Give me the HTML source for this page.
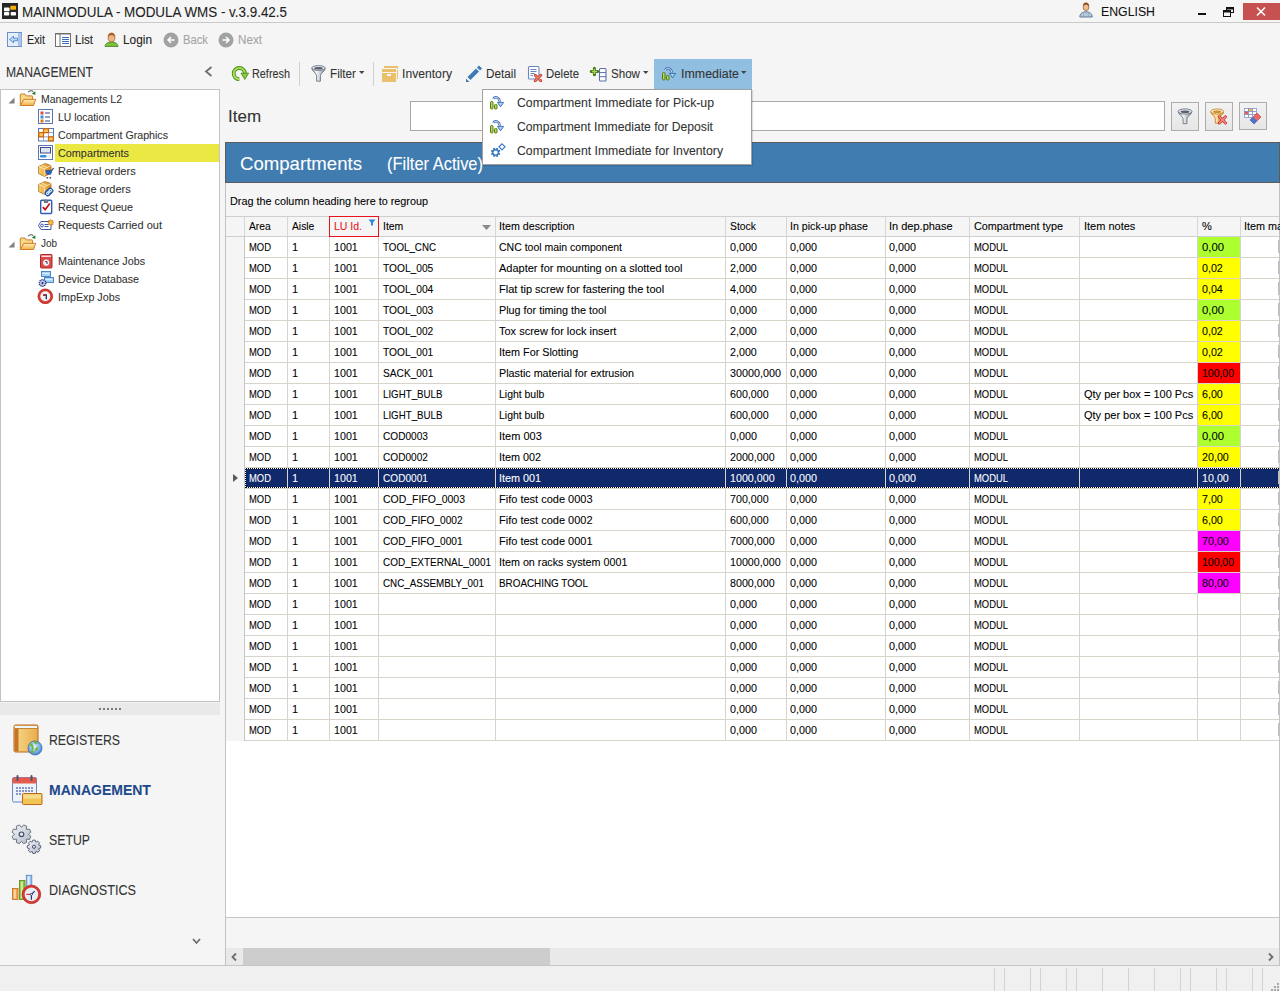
<!DOCTYPE html><html><head><meta charset="utf-8"><style>
html,body{margin:0;padding:0;width:1280px;height:991px;overflow:hidden;background:#f5f5f5;}
body{position:relative;font-family:"Liberation Sans",sans-serif;}
.t{position:absolute;white-space:nowrap;-webkit-text-stroke:0.08px currentColor;}
svg{overflow:visible}
</style></head><body>
<div style="position:absolute;left:0px;top:22px;width:1280px;height:1px;background:#c9c9c9;"></div>
<svg style="position:absolute;left:2px;top:3px;" width="16" height="16" viewBox="0 0 16 16"><rect x="0" y="0" width="16" height="16" fill="#262626"/><rect x="2" y="4.6" width="5.6" height="3.6" rx="0.8" fill="#fff"/><rect x="8.3" y="2.7" width="5.8" height="4" rx="0.8" fill="#f9b000"/><rect x="2" y="9" width="5.2" height="3.6" rx="0.8" fill="#fff"/><rect x="8.7" y="9" width="5.3" height="3.6" rx="0.8" fill="#fff"/></svg>
<div class="t" style="left:22px;top:5px;font-size:14px;line-height:14px;color:#222;font-weight:normal;transform:scaleX(0.9578);transform-origin:0 0;">MAINMODULA - MODULA WMS - v.3.9.42.5</div>
<svg style="position:absolute;left:1079px;top:2px;" width="14" height="16" viewBox="0 0 14 16"><path d="M0.8 15c0-3.2 2.3-5.2 6.2-5.2s6.2 2 6.2 5.2z" fill="#b4c8dc" stroke="#5a6f88" stroke-width="0.9"/><path d="M4.5 10.5v4.5M9.5 10.5v4.5" stroke="#8aa2bc" stroke-width="0.6"/><ellipse cx="7" cy="5" rx="2.9" ry="3.6" fill="#f0c08e" stroke="#8a5a2b" stroke-width="0.7"/><path d="M4 4.8C3.8 2 5.2.6 7 .6s3.2 1.4 3 4.2C9.5 3.2 8.3 2.7 7 2.7S4.5 3.2 4 4.8z" fill="#8e4f22"/></svg>
<div class="t" style="left:1101px;top:5px;font-size:13px;line-height:13px;color:#111;font-weight:normal;transform:scaleX(0.9461);transform-origin:0 0;">ENGLISH</div>
<div style="position:absolute;left:1198px;top:13px;width:8px;height:2px;background:#111;"></div>
<svg style="position:absolute;left:1223px;top:7px;" width="11" height="10" viewBox="0 0 11 10"><rect x="3.5" y="0.5" width="7" height="5" fill="none" stroke="#111" stroke-width="1"/><rect x="0.5" y="3.5" width="7" height="6" fill="#f5f5f5" stroke="#111" stroke-width="1"/><rect x="0.5" y="3.5" width="7" height="2" fill="#111"/><rect x="3.5" y="0.5" width="7" height="2" fill="#111"/></svg>
<div style="position:absolute;left:1243px;top:3px;width:37px;height:17px;background:#c75050;"></div>
<svg style="position:absolute;left:1255px;top:6px;" width="12" height="11" viewBox="0 0 12 11"><path d="M2 1.5L10 9.5M10 1.5L2 9.5" stroke="#fff" stroke-width="1.6"/></svg>
<svg style="position:absolute;left:7px;top:32px;" width="15" height="15" viewBox="0 0 15 15"><rect x="0.5" y="0.5" width="14" height="14" fill="#e6eef9" stroke="#6c8ecb"/><rect x="11" y="1" width="3.5" height="13" fill="#a9c4e8"/><path d="M2.5 7.5l4-3.3v2h4v2.6h-4v2z" fill="#b9dcf6" stroke="#3f79c8" stroke-width="0.8"/></svg>
<div class="t" style="left:27px;top:34px;font-size:12px;line-height:12px;color:#222;font-weight:normal;transform:scaleX(0.8993);transform-origin:0 0;">Exit</div>
<svg style="position:absolute;left:55px;top:33px;" width="16" height="14" viewBox="0 0 16 14"><rect x="0.5" y="0.5" width="15" height="13" fill="#fff" stroke="#707070"/><rect x="0" y="0" width="16" height="1.5" fill="#707070"/><path d="M5 1v13" stroke="#707070"/><path d="M7 4.5h7M7 6.5h7M7 8.5h7M7 10.5h7" stroke="#3a70c0" stroke-width="1"/></svg>
<div class="t" style="left:75px;top:34px;font-size:12px;line-height:12px;color:#222;font-weight:normal;transform:scaleX(0.9632);transform-origin:0 0;">List</div>
<svg style="position:absolute;left:104px;top:32px;" width="15" height="15" viewBox="0 0 15 15"><path d="M1 14.5c0-2.6 2.7-4.6 6.5-4.6s6.5 2 6.5 4.6z" fill="#7cbf3c" stroke="#3f7f1b" stroke-width="0.8"/><ellipse cx="7.5" cy="5.5" rx="3.4" ry="4.3" fill="#f0b483" stroke="#9a5b2b" stroke-width="0.7"/><path d="M4 5.5C3.8 2.3 5.5 0.8 7.5 0.8s3.7 1.5 3.5 4.7C10.3 3.8 9 3.2 7.5 3.2S4.7 3.8 4 5.5z" fill="#a8602c"/></svg>
<div class="t" style="left:123px;top:34px;font-size:12px;line-height:12px;color:#222;font-weight:normal;transform:scaleX(0.9872);transform-origin:0 0;">Login</div>
<svg style="position:absolute;left:163px;top:32px;" width="16" height="16" viewBox="0 0 16 16"><circle cx="8" cy="8" r="7.5" fill="#a2a2a2"/><path d="M11.5 8H5M8 5L5 8l3 3" stroke="#fff" stroke-width="1.5" fill="none"/></svg>
<div class="t" style="left:183px;top:34px;font-size:12px;line-height:12px;color:#a4a4a4;font-weight:normal;transform:scaleX(0.9368);transform-origin:0 0;">Back</div>
<svg style="position:absolute;left:218px;top:32px;" width="16" height="16" viewBox="0 0 16 16"><circle cx="8" cy="8" r="7.5" fill="#a2a2a2"/><path d="M4.5 8H11M8 5l3 3-3 3" stroke="#fff" stroke-width="1.5" fill="none"/></svg>
<div class="t" style="left:238px;top:34px;font-size:12px;line-height:12px;color:#a4a4a4;font-weight:normal;transform:scaleX(0.9722);transform-origin:0 0;">Next</div>
<div class="t" style="left:6px;top:65px;font-size:14px;line-height:14px;color:#333;font-weight:normal;transform:scaleX(0.8670);transform-origin:0 0;">MANAGEMENT</div>
<svg style="position:absolute;left:204px;top:66px;" width="9" height="11" viewBox="0 0 9 11"><path d="M7.5 1L2 5.5 7.5 10" stroke="#6d6d6d" stroke-width="1.8" fill="none"/></svg>
<div style="position:absolute;left:0px;top:89px;width:220px;height:613px;background:#fff;box-sizing:border-box;border:1px solid #c3c3c3;"></div>
<div style="position:absolute;left:0px;top:702px;width:220px;height:13px;background:#e9e9e9;"></div>
<div style="position:absolute;left:0px;top:702px;width:220px;height:1px;background:#f2f2f2;"></div>
<div style="position:absolute;left:99px;top:708px;width:2px;height:2px;background:#7a7a7a;"></div>
<div style="position:absolute;left:103px;top:708px;width:2px;height:2px;background:#7a7a7a;"></div>
<div style="position:absolute;left:107px;top:708px;width:2px;height:2px;background:#7a7a7a;"></div>
<div style="position:absolute;left:111px;top:708px;width:2px;height:2px;background:#7a7a7a;"></div>
<div style="position:absolute;left:115px;top:708px;width:2px;height:2px;background:#7a7a7a;"></div>
<div style="position:absolute;left:119px;top:708px;width:2px;height:2px;background:#7a7a7a;"></div>
<svg style="position:absolute;left:8px;top:97px;" width="7" height="7" viewBox="0 0 7 7"><path d="M6.5 0.5V6.5H0.5z" fill="#808080"/></svg>
<svg style="position:absolute;left:18px;top:88px;" width="20" height="20" viewBox="0 0 20 20"><defs><linearGradient id="fd" x1="0" y1="0" x2="0" y2="1"><stop offset="0" stop-color="#fff0c0"/><stop offset="1" stop-color="#f0b045"/></linearGradient></defs><path d="M2.3 17.3V6.6Q2.3 6 2.9 6H7L8 7.9h6q.6 0 .6.6v3" fill="#f8d98e" stroke="#cf7d22" stroke-width="1"/><path d="M5.8 11.3H17.7L15.5 17.5H2.3z" fill="url(#fd)" stroke="#cf7d22" stroke-width="1"/><path d="M10.2 4.2C11.3 2.4 14 2.2 15.2 3.6" stroke="#666" stroke-width="1.1" fill="none"/><path d="M13.8 5.8L17.3 3.2V7z" fill="#1f7d1f"/></svg>
<div class="t" style="left:41px;top:94px;font-size:11px;line-height:11px;color:#333;font-weight:normal;transform:scaleX(0.9529);transform-origin:0 0;">Managements L2</div>
<div style="position:absolute;left:55px;top:144px;width:164px;height:18px;background:#ece843;"></div>
<svg style="position:absolute;left:38px;top:109px;" width="17" height="17" viewBox="0 0 17 17"><rect x="0.5" y="0.5" width="14" height="14" fill="#fff" stroke="#5a74b4"/><rect x="2.5" y="2.5" width="3" height="3" fill="#dd4a3e"/><rect x="2.5" y="6.5" width="3" height="3" fill="#3a90e0"/><rect x="2.5" y="10.5" width="3" height="3" fill="#e07a12"/><path d="M7 4h5M7 8h5M7 12h5" stroke="#2c3f88" stroke-width="1"/></svg>
<div class="t" style="left:58px;top:112px;font-size:11px;line-height:11px;color:#333;font-weight:normal;transform:scaleX(0.9446);transform-origin:0 0;">LU location</div>
<svg style="position:absolute;left:38px;top:128px;" width="17" height="17" viewBox="0 0 17 17"><rect x="0.5" y="0.5" width="15" height="12.5" fill="#fff" stroke="#5a74b4"/><path d="M0.5 4.6h15M0.5 8.8h15M5.5 0.5v12.5M10.5 0.5v12.5" stroke="#7a90c8" stroke-width="0.8"/><rect x="5.5" y="0.8" width="5" height="3.8" fill="#f6c85a" stroke="#d2650a" stroke-width="1.2"/><rect x="0.8" y="4.6" width="4.7" height="4.2" fill="#f6c85a" stroke="#d2650a" stroke-width="1.2"/><rect x="10.5" y="8.8" width="4.8" height="4" fill="#f6c85a" stroke="#d2650a" stroke-width="1.2"/></svg>
<div class="t" style="left:58px;top:130px;font-size:11px;line-height:11px;color:#333;font-weight:normal;transform:scaleX(0.9673);transform-origin:0 0;">Compartment Graphics</div>
<svg style="position:absolute;left:38px;top:145px;" width="17" height="17" viewBox="0 0 17 17"><rect x="0.5" y="0.5" width="14" height="14" fill="#fff" stroke="#5a74b4"/><rect x="2.5" y="2.5" width="10" height="5.5" fill="#dfe4f0" stroke="#3a4f8a" stroke-width="1"/><rect x="2" y="10" width="6.5" height="2.5" rx="0.8" fill="#3a8ee0"/><rect x="9.5" y="10" width="3" height="2.5" fill="#e8eef8"/></svg>
<div class="t" style="left:58px;top:148px;font-size:11px;line-height:11px;color:#333;font-weight:normal;transform:scaleX(0.9842);transform-origin:0 0;">Compartments</div>
<svg style="position:absolute;left:38px;top:163px;" width="17" height="17" viewBox="0 0 17 17"><defs><linearGradient id="bx" x1="0" x2="1"><stop offset="0" stop-color="#f7cf6a"/><stop offset="1" stop-color="#d98a1e"/></linearGradient></defs><path d="M0.5 3.5L7 0.5 13 2.5V10L6.5 13.5 0.5 10.5z" fill="url(#bx)" stroke="#a8681a" stroke-width="0.7"/><path d="M0.8 3.6L6.3 5.8 12.8 2.6M6.3 5.8V13.2" stroke="#fff3d0" stroke-width="0.8" fill="none"/><path d="M3.5 2.2l6 2.4" stroke="#fde7a8" stroke-width="1"/><path d="M7.5 7.5h6.5l-1.3 3.8H9z" fill="#2a62cc" stroke="#163e90" stroke-width="0.6"/><path d="M13.8 7.5l1.7-2.5" stroke="#163e90" stroke-width="1.2"/><rect x="8.5" y="14" width="1.6" height="1.6" fill="#555"/><rect x="11.5" y="14" width="1.6" height="1.6" fill="#555"/></svg>
<div class="t" style="left:58px;top:166px;font-size:11px;line-height:11px;color:#333;font-weight:normal;">Retrieval orders</div>
<svg style="position:absolute;left:38px;top:181px;" width="17" height="17" viewBox="0 0 17 17"><defs><linearGradient id="bx" x1="0" x2="1"><stop offset="0" stop-color="#f7cf6a"/><stop offset="1" stop-color="#d98a1e"/></linearGradient></defs><path d="M0.5 3.5L7 0.5 13 2.5V10L6.5 13.5 0.5 10.5z" fill="url(#bx)" stroke="#a8681a" stroke-width="0.7"/><path d="M0.8 3.6L6.3 5.8 12.8 2.6M6.3 5.8V13.2" stroke="#fff3d0" stroke-width="0.8" fill="none"/><path d="M3.5 2.2l6 2.4" stroke="#fde7a8" stroke-width="1"/><rect x="6.5" y="8.2" width="9" height="5.6" rx="2.6" transform="rotate(-45 11 11)" fill="#2a66c8" stroke="#123c88" stroke-width="0.7"/><ellipse cx="9.8" cy="12.2" rx="1.5" ry="1" transform="rotate(-45 9.8 12.2)" fill="none" stroke="#fff" stroke-width="1"/><ellipse cx="12.2" cy="9.8" rx="1.5" ry="1" transform="rotate(-45 12.2 9.8)" fill="none" stroke="#fff" stroke-width="1"/></svg>
<div class="t" style="left:58px;top:184px;font-size:11px;line-height:11px;color:#333;font-weight:normal;">Storage orders</div>
<svg style="position:absolute;left:40px;top:199px;" width="17" height="17" viewBox="0 0 17 17"><rect x="0.7" y="1.2" width="11" height="13.3" rx="1" fill="#fff" stroke="#2f5fb5" stroke-width="1.4"/><path d="M3.5 1.5h5l-.6 2.5H4.1z" fill="#777"/><path d="M5 0.6h2v1.2H5z" fill="#888"/><path d="M2.8 8.2L5.2 10.6 9.8 4.6" stroke="#c8141e" stroke-width="1.7" fill="none"/></svg>
<div class="t" style="left:58px;top:202px;font-size:11px;line-height:11px;color:#333;font-weight:normal;transform:scaleX(0.9732);transform-origin:0 0;">Request Queue</div>
<svg style="position:absolute;left:38px;top:219px;" width="17" height="17" viewBox="0 0 17 17"><path d="M3 2.5H13V10.5H3L0.5 6.5z" fill="#fff" stroke="#3e56a0" stroke-width="1"/><circle cx="4" cy="6.5" r="1.4" fill="none" stroke="#3e56a0" stroke-width="1"/><path d="M6.5 5.5h4M6.5 7.5h4" stroke="#3e56a0" stroke-width="1"/><path d="M12.8 0.5l.7 1.4 1.5-.5-.5 1.5 1.4.7-1.4.7.5 1.5-1.5-.5-.7 1.4-.7-1.4-1.5.5.5-1.5-1.4-.7 1.4-.7-.5-1.5 1.5.5z" fill="#f8c040" stroke="#d0600a" stroke-width="0.6"/></svg>
<div class="t" style="left:58px;top:220px;font-size:11px;line-height:11px;color:#333;font-weight:normal;">Requests Carried out</div>
<svg style="position:absolute;left:8px;top:241px;" width="7" height="7" viewBox="0 0 7 7"><path d="M6.5 0.5V6.5H0.5z" fill="#808080"/></svg>
<svg style="position:absolute;left:18px;top:232px;" width="20" height="20" viewBox="0 0 20 20"><defs><linearGradient id="fd" x1="0" y1="0" x2="0" y2="1"><stop offset="0" stop-color="#fff0c0"/><stop offset="1" stop-color="#f0b045"/></linearGradient></defs><path d="M2.3 17.3V6.6Q2.3 6 2.9 6H7L8 7.9h6q.6 0 .6.6v3" fill="#f8d98e" stroke="#cf7d22" stroke-width="1"/><path d="M5.8 11.3H17.7L15.5 17.5H2.3z" fill="url(#fd)" stroke="#cf7d22" stroke-width="1"/><path d="M10.2 4.2C11.3 2.4 14 2.2 15.2 3.6" stroke="#666" stroke-width="1.1" fill="none"/><path d="M13.8 5.8L17.3 3.2V7z" fill="#1f7d1f"/></svg>
<div class="t" style="left:41px;top:238px;font-size:11px;line-height:11px;color:#333;font-weight:normal;transform:scaleX(0.9014);transform-origin:0 0;">Job</div>
<svg style="position:absolute;left:40px;top:254px;" width="16" height="16" viewBox="0 0 16 16"><rect x="0.5" y="0.5" width="11.5" height="13.5" rx="0.8" fill="#e04848" stroke="#b02626" stroke-width="1"/><rect x="1.5" y="1.5" width="9.5" height="1.5" fill="#fbe0e0"/><circle cx="6.2" cy="8.6" r="3.6" fill="#f4f6fb" stroke="#b02626" stroke-width="0.6"/><path d="M5 7.5h2v2.5" stroke="#1f2a5a" stroke-width="1" fill="none"/><path d="M5 7.5h1.5" stroke="#d22" stroke-width="1"/></svg>
<div class="t" style="left:58px;top:256px;font-size:11px;line-height:11px;color:#333;font-weight:normal;transform:scaleX(0.9744);transform-origin:0 0;">Maintenance Jobs</div>
<svg style="position:absolute;left:40px;top:271px;" width="16" height="16" viewBox="0 0 16 16"><rect x="1.5" y="0.5" width="9" height="5" fill="#a8d4f6" stroke="#3f7cc4" stroke-width="0.9"/><rect x="4.5" y="6.5" width="9" height="5" fill="#a8d4f6" stroke="#3f7cc4" stroke-width="0.9"/><path d="M2.3 2.5h7M5.3 8.5h7" stroke="#e8f4ff" stroke-width="0.8"/><circle cx="2.5" cy="12" r="3.3" fill="#b8c4e4" stroke="#1c2c70" stroke-width="1.3" stroke-dasharray="1.2 0.8"/><circle cx="2.5" cy="12" r="1" fill="#1c2c70"/></svg>
<div class="t" style="left:58px;top:274px;font-size:11px;line-height:11px;color:#333;font-weight:normal;transform:scaleX(0.9668);transform-origin:0 0;">Device Database</div>
<svg style="position:absolute;left:38px;top:289px;" width="16" height="16" viewBox="0 0 16 16"><circle cx="7.3" cy="7.3" r="6.3" fill="#f2f4fa" stroke="#d83a32" stroke-width="2.6"/><circle cx="7.3" cy="7.3" r="7.4" fill="none" stroke="#a82a24" stroke-width="0.5"/><path d="M5 6h3.3v4.2" stroke="#1f2a5a" stroke-width="1.3" fill="none"/><path d="M5 6h2.5" stroke="#d22" stroke-width="1.3"/></svg>
<div class="t" style="left:58px;top:292px;font-size:11px;line-height:11px;color:#333;font-weight:normal;transform:scaleX(0.9749);transform-origin:0 0;">ImpExp Jobs</div>
<svg style="position:absolute;left:8px;top:720px;" width="40" height="40" viewBox="0 0 40 40"><defs><linearGradient id="bk" x1="0" x2="1"><stop offset="0" stop-color="#f6d98a"/><stop offset="1" stop-color="#e9ac4c"/></linearGradient><radialGradient id="gl" cx="0.45" cy="0.4" r="0.6"><stop offset="0" stop-color="#e8f6ff"/><stop offset="1" stop-color="#3f86d6"/></radialGradient></defs><rect x="6" y="5" width="24" height="27" rx="1.5" fill="url(#bk)" stroke="#b8661c" stroke-width="1"/><rect x="7" y="6" width="22" height="2.5" fill="#eef6ff"/><path d="M6.5 8.5h23" stroke="#c98530" stroke-width="1"/><rect x="6.5" y="9" width="4" height="22.5" fill="#c47424"/><circle cx="27" cy="28" r="7" fill="url(#gl)" stroke="#2f5f9e" stroke-width="0.7"/><path d="M21.5 25c1.5-1 2.5 0 3 1.5s-.5 2.5.5 3.5M26 21.5c1 1.5 2.5 1 3 2.5M30 28c-1.5 0-2.5 1.5-1.5 3M23 32c1-.5 2 0 2.5.5" stroke="#6dbb2f" stroke-width="2" fill="none"/></svg>
<svg style="position:absolute;left:8px;top:770px;" width="40" height="40" viewBox="0 0 40 40"><rect x="4.5" y="7.5" width="24" height="24.5" rx="1.5" fill="#eef2fa" stroke="#6f86c0" stroke-width="1"/><rect x="4.5" y="7.5" width="24" height="6" rx="1.5" fill="#e45b4e"/><rect x="8.5" y="5" width="2" height="6" rx="1" fill="#4a5470"/><rect x="22.5" y="5" width="2" height="6" rx="1" fill="#4a5470"/><g fill="#8796c4"><rect x="8" y="17" width="2" height="2"/><rect x="11" y="17" width="2" height="2"/><rect x="14" y="17" width="2" height="2"/><rect x="17" y="17" width="2" height="2"/><rect x="20" y="17" width="2" height="2"/><rect x="23" y="17" width="2" height="2"/><rect x="8" y="20" width="2" height="2"/><rect x="11" y="20" width="2" height="2"/><rect x="14" y="20" width="2" height="2"/><rect x="17" y="20" width="2" height="2"/><rect x="20" y="20" width="2" height="2"/><rect x="23" y="20" width="2" height="2"/><rect x="8" y="23" width="2" height="2"/><rect x="11" y="23" width="2" height="2"/></g><rect x="14.5" y="23.5" width="19.5" height="11" rx="1" fill="#f1c454" stroke="#bb6a1a" stroke-width="1"/><rect x="15.5" y="24.5" width="17.5" height="4" fill="#f7dc90"/></svg>
<svg style="position:absolute;left:8px;top:820px;" width="40" height="40" viewBox="0 0 40 40"><defs><linearGradient id="gr" x1="0" y1="0" x2="1" y2="1"><stop offset="0" stop-color="#f4f5f8"/><stop offset="1" stop-color="#b3b9c6"/></linearGradient></defs><path d="M20.50 14.44 L22.88 16.36 L21.59 19.48 L18.55 19.15 L18.35 19.35 L18.68 22.39 L15.56 23.68 L13.64 21.30 L13.36 21.30 L11.44 23.68 L8.32 22.39 L8.65 19.35 L8.45 19.15 L5.41 19.48 L4.12 16.36 L6.50 14.44 L6.50 14.16 L4.12 12.24 L5.41 9.12 L8.45 9.45 L8.65 9.25 L8.32 6.21 L11.44 4.92 L13.36 7.30 L13.64 7.30 L15.56 4.92 L18.68 6.21 L18.35 9.25 L18.55 9.45 L21.59 9.12 L22.88 12.24 L20.50 14.16Z" fill="url(#gr)" stroke="#5f6677" stroke-width="0.9"/><circle cx="13.5" cy="14.3" r="2.3" fill="#e8e8e8" stroke="#454f70" stroke-width="1.2"/><path d="M30.66 24.98 L32.69 25.60 L32.69 28.00 L30.66 28.62 L30.58 28.80 L31.58 30.69 L29.89 32.38 L28.00 31.38 L27.82 31.46 L27.20 33.49 L24.80 33.49 L24.18 31.46 L24.00 31.38 L22.11 32.38 L20.42 30.69 L21.42 28.80 L21.34 28.62 L19.31 28.00 L19.31 25.60 L21.34 24.98 L21.42 24.80 L20.42 22.91 L22.11 21.22 L24.00 22.22 L24.18 22.14 L24.80 20.11 L27.20 20.11 L27.82 22.14 L28.00 22.22 L29.89 21.22 L31.58 22.91 L30.58 24.80Z" fill="url(#gr)" stroke="#4f5a7a" stroke-width="0.9"/><circle cx="26" cy="26.8" r="1.6" fill="#ddd" stroke="#454f70" stroke-width="1"/></svg>
<svg style="position:absolute;left:8px;top:870px;" width="40" height="40" viewBox="0 0 40 40"><rect x="4.5" y="18.5" width="5.5" height="11" fill="#f2a653" stroke="#c46a1c" stroke-width="0.8"/><rect x="5.8" y="19.5" width="2" height="9" fill="#fbd9a8"/><rect x="11.5" y="10.5" width="5.5" height="19" fill="#8fc440" stroke="#5a8a1a" stroke-width="0.8"/><rect x="12.8" y="11.5" width="2" height="17" fill="#d4ee9a"/><rect x="18.3" y="5.3" width="5.5" height="12" fill="#9cc5ee" stroke="#4f82c0" stroke-width="0.8"/><rect x="19.6" y="6.3" width="2" height="10" fill="#e2f0fc"/><circle cx="23.4" cy="24.4" r="8.1" fill="#e8eef8" stroke="#d63a32" stroke-width="2.6"/><circle cx="23.4" cy="24.4" r="9.3" fill="none" stroke="#a8231d" stroke-width="0.6"/><path d="M23.4 24.4h-5" stroke="#d33" stroke-width="1.2"/><path d="M23.4 24.4v5.4M23.4 24.4l3.3-3.3" stroke="#2a3560" stroke-width="1.2"/><circle cx="23.4" cy="24.4" r="1" fill="#fff" stroke="#2a3560" stroke-width="0.8"/></svg>
<div class="t" style="left:49px;top:733px;font-size:14px;line-height:14px;color:#333;font-weight:normal;transform:scaleX(0.8776);transform-origin:0 0;">REGISTERS</div>
<div class="t" style="left:49px;top:783px;font-size:14px;line-height:14px;color:#1e4a8c;font-weight:bold;">MANAGEMENT</div>
<div class="t" style="left:49px;top:833px;font-size:14px;line-height:14px;color:#333;font-weight:normal;transform:scaleX(0.8782);transform-origin:0 0;">SETUP</div>
<div class="t" style="left:49px;top:883px;font-size:14px;line-height:14px;color:#333;font-weight:normal;transform:scaleX(0.9018);transform-origin:0 0;">DIAGNOSTICS</div>
<svg style="position:absolute;left:192px;top:938px;" width="9" height="7" viewBox="0 0 9 7"><path d="M1 1l3.5 4L8 1" stroke="#6d6d6d" stroke-width="1.8" fill="none"/></svg>
<div style="position:absolute;left:0px;top:966px;width:1280px;height:25px;background:#f0f0f0;"></div>
<div style="position:absolute;left:0px;top:965px;width:226px;height:1px;background:#c8c8c8;"></div>
<div style="position:absolute;left:994px;top:968px;width:1px;height:23px;background:#d3d3d3;"></div>
<div style="position:absolute;left:1004px;top:968px;width:1px;height:23px;background:#d3d3d3;"></div>
<div style="position:absolute;left:1030px;top:968px;width:1px;height:23px;background:#d3d3d3;"></div>
<div style="position:absolute;left:1040px;top:968px;width:1px;height:23px;background:#d3d3d3;"></div>
<div style="position:absolute;left:1066px;top:968px;width:1px;height:23px;background:#d3d3d3;"></div>
<div style="position:absolute;left:1076px;top:968px;width:1px;height:23px;background:#d3d3d3;"></div>
<div style="position:absolute;left:1102px;top:968px;width:1px;height:23px;background:#d3d3d3;"></div>
<div style="position:absolute;left:1128px;top:968px;width:1px;height:23px;background:#d3d3d3;"></div>
<div style="position:absolute;left:1154px;top:968px;width:1px;height:23px;background:#d3d3d3;"></div>
<div style="position:absolute;left:1180px;top:968px;width:1px;height:23px;background:#d3d3d3;"></div>
<div style="position:absolute;left:1190px;top:968px;width:1px;height:23px;background:#d3d3d3;"></div>
<div style="position:absolute;left:1216px;top:968px;width:1px;height:23px;background:#d3d3d3;"></div>
<div style="position:absolute;left:1226px;top:968px;width:1px;height:23px;background:#d3d3d3;"></div>
<div style="position:absolute;left:1252px;top:968px;width:1px;height:23px;background:#d3d3d3;"></div>
<div style="position:absolute;left:1262px;top:968px;width:1px;height:23px;background:#d3d3d3;"></div>
<div style="position:absolute;left:1277px;top:983px;width:2px;height:2px;background:#a8a8a8;"></div>
<div style="position:absolute;left:1274px;top:986px;width:2px;height:2px;background:#a8a8a8;"></div>
<div style="position:absolute;left:1277px;top:986px;width:2px;height:2px;background:#a8a8a8;"></div>
<div style="position:absolute;left:1271px;top:989px;width:2px;height:2px;background:#a8a8a8;"></div>
<div style="position:absolute;left:1274px;top:989px;width:2px;height:2px;background:#a8a8a8;"></div>
<div style="position:absolute;left:1277px;top:989px;width:2px;height:2px;background:#a8a8a8;"></div>
<!--CONTENT-->
<svg style="position:absolute;left:231px;top:66px;" width="18" height="16" viewBox="0 0 18 16"><path d="M8.3 13.2A5.6 5.6 0 1 1 13.9 7.6" stroke="#4a8f16" stroke-width="3.8" fill="none"/><path d="M8.3 13.2A5.6 5.6 0 1 1 13.9 7.6" stroke="#a6dc5a" stroke-width="2" fill="none"/><path d="M10 7.2h7.6l-3.8 6.2z" fill="#8ccc3a" stroke="#3f7f12" stroke-width="0.8"/></svg>
<div class="t" style="left:252px;top:68px;font-size:12px;line-height:12px;color:#333;font-weight:normal;transform:scaleX(0.9041);transform-origin:0 0;">Refresh</div>
<div style="position:absolute;left:299px;top:62px;width:1px;height:24px;background:#cfcfcf;"></div>
<svg style="position:absolute;left:311px;top:65px;" width="15" height="17" viewBox="0 0 15 17"><defs><linearGradient id="fn" x1="0" x2="1"><stop offset="0" stop-color="#9aa2ae"/><stop offset="0.35" stop-color="#f4f6f9"/><stop offset="1" stop-color="#8a93a0"/></linearGradient></defs><path d="M0.8 3.2c0 3 4.5 4.5 4.8 7.5v5.5h3.8v-5.5c.3-3 4.8-4.5 4.8-7.5" fill="url(#fn)" stroke="#5d6572" stroke-width="0.8"/><ellipse cx="7.5" cy="3" rx="6.7" ry="2.4" fill="#e6e9ee" stroke="#5d6572" stroke-width="0.8"/><ellipse cx="7.5" cy="3.3" rx="4.3" ry="1.2" fill="#59616d"/></svg>
<div class="t" style="left:330px;top:68px;font-size:12px;line-height:12px;color:#333;font-weight:normal;transform:scaleX(0.9748);transform-origin:0 0;">Filter</div>
<svg style="position:absolute;left:359px;top:71px;" width="6" height="4" viewBox="0 0 6 4"><path d="M0 0h5.5L2.75 3z" fill="#444"/></svg>
<div style="position:absolute;left:373px;top:62px;width:1px;height:24px;background:#cfcfcf;"></div>
<svg style="position:absolute;left:382px;top:66px;" width="16" height="16" viewBox="0 0 16 16"><g fill="#ebc06c"><rect x="2" y="0" width="14" height="2"/><rect x="15" y="0" width="1" height="3"/><rect x="0" y="3" width="14" height="3"/><rect x="15" y="4" width="1" height="9"/><rect x="0" y="7" width="14" height="9"/></g><rect x="5" y="8.2" width="4" height="1.8" fill="#fff"/></svg>
<div class="t" style="left:402px;top:68px;font-size:12px;line-height:12px;color:#333;font-weight:normal;transform:scaleX(1.0130);transform-origin:0 0;">Inventory</div>
<svg style="position:absolute;left:465px;top:65px;" width="18" height="18" viewBox="0 0 18 18"><g fill="#3d7ab8"><path d="M1 13.5L4.5 17H1z"/><path d="M2.5 12L11 3.5 14 6.5 5.5 15z"/><path d="M12 2.5L14 0.5 17 3.5 15 5.5z"/></g></svg>
<div class="t" style="left:486px;top:68px;font-size:12px;line-height:12px;color:#333;font-weight:normal;transform:scaleX(0.9776);transform-origin:0 0;">Detail</div>
<svg style="position:absolute;left:528px;top:66px;" width="15" height="16" viewBox="0 0 15 16"><rect x="0.5" y="0.5" width="10.5" height="12.5" rx="1" fill="#fff" stroke="#6a85c4" stroke-width="1.1"/><path d="M2.5 3.5h6M2.5 5.5h6M2.5 7.5h4M2.5 9.5h2.5" stroke="#6a85c4" stroke-width="1"/><path d="M7.2 9.2l5.6 5.6M12.8 9.2l-5.6 5.6" stroke="#b82a2a" stroke-width="2.8" stroke-linecap="round"/><path d="M7.2 9.2l5.6 5.6M12.8 9.2l-5.6 5.6" stroke="#f28a6a" stroke-width="1.4" stroke-linecap="round"/></svg>
<div class="t" style="left:546px;top:68px;font-size:12px;line-height:12px;color:#333;font-weight:normal;transform:scaleX(0.9514);transform-origin:0 0;">Delete</div>
<svg style="position:absolute;left:590px;top:67px;" width="17" height="15" viewBox="0 0 17 15"><path d="M4.4 1.3v6.4M1.2 4.5h6.4" stroke="#4a7a16" stroke-width="3" stroke-linecap="round"/><path d="M4.4 2v5M1.9 4.5h5" stroke="#a6d65a" stroke-width="1.3"/><rect x="9.5" y="1.5" width="6.5" height="12.5" rx="1" fill="#fff" stroke="#5a70ad" stroke-width="1.1"/><path d="M9.5 5.6h6.5M9.5 9.7h6.5" stroke="#5a70ad" stroke-width="1"/></svg>
<div class="t" style="left:611px;top:68px;font-size:12px;line-height:12px;color:#333;font-weight:normal;transform:scaleX(0.9657);transform-origin:0 0;">Show</div>
<svg style="position:absolute;left:643px;top:71px;" width="6" height="4" viewBox="0 0 6 4"><path d="M0 0h5.5L2.75 3z" fill="#444"/></svg>
<div style="position:absolute;left:654px;top:59px;width:98px;height:30px;background:#91bfe1;"></div>
<svg style="position:absolute;left:662px;top:69px;" width="15" height="12" viewBox="0 0 15 12"><rect x="0.5" y="3.5" width="2.5" height="7.5" rx="1" fill="#b4d85a" stroke="#577a10" stroke-width="1"/><rect x="4.5" y="6.5" width="2.5" height="4.5" rx="1" fill="#b4d85a" stroke="#577a10" stroke-width="1"/><path d="M3.2 0.9C4.8-1.6 8.8-1.6 10 3.9" stroke="#3a67b0" stroke-width="2.3" fill="none"/><path d="M3.2 0.9C4.8-1.6 8.8-1.6 10 3.9" stroke="#eef6ff" stroke-width="0.9" fill="none"/><path d="M7.4 4.4h6.3l-3.15 4.4z" fill="#9ad4f4" stroke="#2e5aa0" stroke-width="0.8"/></svg>
<div class="t" style="left:681px;top:68px;font-size:12px;line-height:12px;color:#333;font-weight:normal;transform:scaleX(1.0351);transform-origin:0 0;">Immediate</div>
<svg style="position:absolute;left:741px;top:71px;" width="6" height="4" viewBox="0 0 6 4"><path d="M0 0h5.5L2.75 3z" fill="#444"/></svg>
<div class="t" style="left:228px;top:108px;font-size:17px;line-height:17px;color:#333;font-weight:normal;">Item</div>
<div style="position:absolute;left:410px;top:101px;width:755px;height:30px;background:#fff;box-sizing:border-box;border:1px solid #a9a9a9;"></div>
<div style="position:absolute;left:1171px;top:102px;width:28px;height:29px;background:linear-gradient(#f2f2f2,#e6e6e6);box-sizing:border-box;border:1px solid #adadad;"></div>
<div style="position:absolute;left:1205px;top:102px;width:28px;height:29px;background:linear-gradient(#f2f2f2,#e6e6e6);box-sizing:border-box;border:1px solid #adadad;"></div>
<div style="position:absolute;left:1239px;top:102px;width:28px;height:28px;background:linear-gradient(#f2f2f2,#e6e6e6);box-sizing:border-box;border:1px solid #adadad;"></div>
<svg style="position:absolute;left:1177px;top:108px;" width="16" height="16" viewBox="0 0 16 16"><path d="M1.2 3.7c0 3 4.6 4 4.9 7v5h3.8v-5c.3-3 4.9-4 4.9-7" fill="url(#fn)" stroke="#5d6572" stroke-width="0.8"/><ellipse cx="8" cy="3.5" rx="6.9" ry="2.6" fill="#e6e9ee" stroke="#5d6572" stroke-width="0.8"/><ellipse cx="8" cy="3.8" rx="4.5" ry="1.3" fill="#59616d"/></svg>
<svg style="position:absolute;left:1210px;top:108px;" width="18" height="17" viewBox="0 0 18 17"><defs><linearGradient id="fo" x1="0" x2="1"><stop offset="0" stop-color="#e8a838"/><stop offset="0.4" stop-color="#fde8b0"/><stop offset="1" stop-color="#d89028"/></linearGradient></defs><path d="M0.8 3.7c0 3 4.2 4 4.5 7v4.5h3.8v-4.5c.3-3 4.5-4 4.5-7" fill="url(#fo)" stroke="#c07a18" stroke-width="0.8"/><ellipse cx="7.2" cy="3.5" rx="6.4" ry="2.5" fill="#fdeec8" stroke="#c07a18" stroke-width="0.8"/><ellipse cx="7.2" cy="3.8" rx="4.2" ry="1.2" fill="#c89038"/><path d="M9.3 8.8l6.2 6.2M15.5 8.8l-6.2 6.2" stroke="#c83030" stroke-width="3" stroke-linecap="round"/><path d="M9.3 8.8l6.2 6.2M15.5 8.8l-6.2 6.2" stroke="#f59080" stroke-width="1.4" stroke-linecap="round"/></svg>
<svg style="position:absolute;left:1244px;top:108px;" width="18" height="15" viewBox="0 0 18 15"><g stroke="#7a8cc0" stroke-width="0.7"><rect x="0.5" y="0.5" width="4" height="3" fill="#fff"/><rect x="4.5" y="0.5" width="4" height="3" fill="#f6b54a"/><rect x="8.5" y="0.5" width="4" height="3" fill="#fff"/><rect x="0.5" y="3.5" width="4" height="3" fill="#e85a5a"/><rect x="4.5" y="3.5" width="4" height="3" fill="#fff"/><rect x="8.5" y="3.5" width="4" height="3" fill="#fff"/><rect x="0.5" y="6.5" width="4" height="3" fill="#fff"/><rect x="4.5" y="6.5" width="4" height="3" fill="#fff"/></g><path d="M6 12l7-7 4 4-7 7z" fill="#e86a6a" stroke="#b33" stroke-width="0.6"/><path d="M6 12l3-3 4 4-3 3z" fill="#3a7ad8"/></svg>
<div style="position:absolute;left:225px;top:142px;width:1055px;height:41px;background:#407cb0;box-sizing:border-box;border:1px solid #5c5c5c;"></div>
<div class="t" style="left:240px;top:154px;font-size:19px;line-height:19px;color:#fff;font-weight:normal;transform:scaleX(0.9791);transform-origin:0 0;">Compartments</div>
<div class="t" style="left:387px;top:154px;font-size:19px;line-height:19px;color:#fff;font-weight:normal;transform:scaleX(0.8660);transform-origin:0 0;">(Filter Active)</div>
<div style="position:absolute;left:225px;top:183px;width:1055px;height:782px;background:#f5f5f5;box-sizing:border-box;border-left:1px solid #c2c2c2;border-right:1px solid #c2c2c2;"></div>
<div class="t" style="left:230px;top:196px;font-size:11px;line-height:11px;color:#000;font-weight:normal;transform:scaleX(0.9842);transform-origin:0 0;">Drag the column heading here to regroup</div>
<div style="position:absolute;left:226px;top:216px;width:1053px;height:1px;background:#cfcfcf;"></div>
<div style="position:absolute;left:226px;top:217px;width:1053px;height:19px;background:#f5f5f5;"></div>
<div style="position:absolute;left:226px;top:236px;width:1053px;height:1px;background:#cfcfcf;"></div>
<div style="position:absolute;left:244px;top:217px;width:1px;height:19px;background:#d6d6d6;"></div>
<div style="position:absolute;left:287px;top:217px;width:1px;height:19px;background:#d6d6d6;"></div>
<div style="position:absolute;left:329px;top:217px;width:1px;height:19px;background:#d6d6d6;"></div>
<div style="position:absolute;left:378px;top:217px;width:1px;height:19px;background:#d6d6d6;"></div>
<div style="position:absolute;left:495px;top:217px;width:1px;height:19px;background:#d6d6d6;"></div>
<div style="position:absolute;left:725px;top:217px;width:1px;height:19px;background:#d6d6d6;"></div>
<div style="position:absolute;left:786px;top:217px;width:1px;height:19px;background:#d6d6d6;"></div>
<div style="position:absolute;left:885px;top:217px;width:1px;height:19px;background:#d6d6d6;"></div>
<div style="position:absolute;left:969px;top:217px;width:1px;height:19px;background:#d6d6d6;"></div>
<div style="position:absolute;left:1079px;top:217px;width:1px;height:19px;background:#d6d6d6;"></div>
<div style="position:absolute;left:1197px;top:217px;width:1px;height:19px;background:#d6d6d6;"></div>
<div style="position:absolute;left:1240px;top:217px;width:1px;height:19px;background:#d6d6d6;"></div>
<div class="t" style="left:249px;top:221px;font-size:11px;line-height:11px;color:#000;font-weight:normal;transform:scaleX(0.9330);transform-origin:0 0;">Area</div>
<div class="t" style="left:292px;top:221px;font-size:11px;line-height:11px;color:#000;font-weight:normal;transform:scaleX(0.9344);transform-origin:0 0;">Aisle</div>
<div class="t" style="left:383px;top:221px;font-size:11px;line-height:11px;color:#000;font-weight:normal;transform:scaleX(0.9498);transform-origin:0 0;">Item</div>
<div class="t" style="left:499px;top:221px;font-size:11px;line-height:11px;color:#000;font-weight:normal;transform:scaleX(0.9728);transform-origin:0 0;">Item description</div>
<div class="t" style="left:730px;top:221px;font-size:11px;line-height:11px;color:#000;font-weight:normal;transform:scaleX(0.9377);transform-origin:0 0;">Stock</div>
<div class="t" style="left:790px;top:221px;font-size:11px;line-height:11px;color:#000;font-weight:normal;transform:scaleX(0.9663);transform-origin:0 0;">In pick-up phase</div>
<div class="t" style="left:889px;top:221px;font-size:11px;line-height:11px;color:#000;font-weight:normal;">In dep.phase</div>
<div class="t" style="left:974px;top:221px;font-size:11px;line-height:11px;color:#000;font-weight:normal;transform:scaleX(0.9836);transform-origin:0 0;">Compartment type</div>
<div class="t" style="left:1084px;top:221px;font-size:11px;line-height:11px;color:#000;font-weight:normal;">Item notes</div>
<div class="t" style="left:1202px;top:221px;font-size:11px;line-height:11px;color:#000;font-weight:normal;">%</div>
<div class="t" style="left:1244px;top:221px;font-size:11px;line-height:11px;color:#000;font-weight:normal;transform:scaleX(0.9811);transform-origin:0 0;">Item ma</div>
<div style="position:absolute;left:329px;top:216px;width:50px;height:21px;background:transparent;box-sizing:border-box;border:1px solid #e8141c;"></div>
<div class="t" style="left:334px;top:221px;font-size:11px;line-height:11px;color:#e8141c;font-weight:normal;transform:scaleX(0.9537);transform-origin:0 0;">LU Id.</div>
<svg style="position:absolute;left:368px;top:219px;" width="8" height="7" viewBox="0 0 8 7"><path d="M0.5 0.5h7L5 3.5V6.5H3V3.5z" fill="#2a8ad8"/></svg>
<svg style="position:absolute;left:482px;top:225px;" width="9" height="5" viewBox="0 0 9 5"><path d="M0 0h9L4.5 5z" fill="#8a8a8a"/></svg>
<div style="position:absolute;left:226px;top:237px;width:1053px;height:680px;background:#fff;"></div>
<div style="position:absolute;left:226px;top:237px;width:18px;height:504px;background:#f5f5f5;"></div>
<div style="position:absolute;left:244px;top:237px;width:1px;height:504px;background:#c6c6c6;"></div>
<div style="position:absolute;left:1198px;top:237px;width:42px;height:20px;background:#adff2f;"></div>
<div style="position:absolute;left:245px;top:257px;width:1034px;height:1px;background:#d8d4cc;"></div>
<div class="t" style="left:249px;top:242px;font-size:11px;line-height:11px;color:#000;font-weight:normal;transform:scaleX(0.8570);transform-origin:0 0;">MOD</div>
<div class="t" style="left:292px;top:242px;font-size:11px;line-height:11px;color:#000;font-weight:normal;">1</div>
<div class="t" style="left:334px;top:242px;font-size:11px;line-height:11px;color:#000;font-weight:normal;transform:scaleX(0.9726);transform-origin:0 0;">1001</div>
<div class="t" style="left:383px;top:242px;font-size:11px;line-height:11px;color:#000;font-weight:normal;transform:scaleX(0.8877);transform-origin:0 0;">TOOL_CNC</div>
<div class="t" style="left:499px;top:242px;font-size:11px;line-height:11px;color:#000;font-weight:normal;transform:scaleX(0.9534);transform-origin:0 0;">CNC tool main component</div>
<div class="t" style="left:730px;top:242px;font-size:11px;line-height:11px;color:#000;font-weight:normal;transform:scaleX(0.9807);transform-origin:0 0;">0,000</div>
<div class="t" style="left:790px;top:242px;font-size:11px;line-height:11px;color:#000;font-weight:normal;transform:scaleX(0.9807);transform-origin:0 0;">0,000</div>
<div class="t" style="left:889px;top:242px;font-size:11px;line-height:11px;color:#000;font-weight:normal;transform:scaleX(0.9807);transform-origin:0 0;">0,000</div>
<div class="t" style="left:974px;top:242px;font-size:11px;line-height:11px;color:#000;font-weight:normal;transform:scaleX(0.8557);transform-origin:0 0;">MODUL</div>
<div class="t" style="left:1202px;top:242px;font-size:11px;line-height:11px;color:#000;font-weight:normal;transform:scaleX(1.0270);transform-origin:0 0;">0,00</div>
<div style="position:absolute;left:1278px;top:240px;width:1px;height:13px;background:#bdbdbd;"></div>
<div style="position:absolute;left:1198px;top:258px;width:42px;height:20px;background:#ffff00;"></div>
<div style="position:absolute;left:245px;top:278px;width:1034px;height:1px;background:#d8d4cc;"></div>
<div class="t" style="left:249px;top:263px;font-size:11px;line-height:11px;color:#000;font-weight:normal;transform:scaleX(0.8570);transform-origin:0 0;">MOD</div>
<div class="t" style="left:292px;top:263px;font-size:11px;line-height:11px;color:#000;font-weight:normal;">1</div>
<div class="t" style="left:334px;top:263px;font-size:11px;line-height:11px;color:#000;font-weight:normal;transform:scaleX(0.9726);transform-origin:0 0;">1001</div>
<div class="t" style="left:383px;top:263px;font-size:11px;line-height:11px;color:#000;font-weight:normal;transform:scaleX(0.9274);transform-origin:0 0;">TOOL_005</div>
<div class="t" style="left:499px;top:263px;font-size:11px;line-height:11px;color:#000;font-weight:normal;">Adapter for mounting on a slotted tool</div>
<div class="t" style="left:730px;top:263px;font-size:11px;line-height:11px;color:#000;font-weight:normal;transform:scaleX(0.9731);transform-origin:0 0;">2,000</div>
<div class="t" style="left:790px;top:263px;font-size:11px;line-height:11px;color:#000;font-weight:normal;transform:scaleX(0.9807);transform-origin:0 0;">0,000</div>
<div class="t" style="left:889px;top:263px;font-size:11px;line-height:11px;color:#000;font-weight:normal;transform:scaleX(0.9807);transform-origin:0 0;">0,000</div>
<div class="t" style="left:974px;top:263px;font-size:11px;line-height:11px;color:#000;font-weight:normal;transform:scaleX(0.8557);transform-origin:0 0;">MODUL</div>
<div class="t" style="left:1202px;top:263px;font-size:11px;line-height:11px;color:#000;font-weight:normal;transform:scaleX(0.9727);transform-origin:0 0;">0,02</div>
<div style="position:absolute;left:1278px;top:261px;width:1px;height:13px;background:#bdbdbd;"></div>
<div style="position:absolute;left:1198px;top:279px;width:42px;height:20px;background:#ffff00;"></div>
<div style="position:absolute;left:245px;top:299px;width:1034px;height:1px;background:#d8d4cc;"></div>
<div class="t" style="left:249px;top:284px;font-size:11px;line-height:11px;color:#000;font-weight:normal;transform:scaleX(0.8570);transform-origin:0 0;">MOD</div>
<div class="t" style="left:292px;top:284px;font-size:11px;line-height:11px;color:#000;font-weight:normal;">1</div>
<div class="t" style="left:334px;top:284px;font-size:11px;line-height:11px;color:#000;font-weight:normal;transform:scaleX(0.9726);transform-origin:0 0;">1001</div>
<div class="t" style="left:383px;top:284px;font-size:11px;line-height:11px;color:#000;font-weight:normal;transform:scaleX(0.9274);transform-origin:0 0;">TOOL_004</div>
<div class="t" style="left:499px;top:284px;font-size:11px;line-height:11px;color:#000;font-weight:normal;">Flat tip screw for fastering the tool</div>
<div class="t" style="left:730px;top:284px;font-size:11px;line-height:11px;color:#000;font-weight:normal;transform:scaleX(0.9731);transform-origin:0 0;">4,000</div>
<div class="t" style="left:790px;top:284px;font-size:11px;line-height:11px;color:#000;font-weight:normal;transform:scaleX(0.9807);transform-origin:0 0;">0,000</div>
<div class="t" style="left:889px;top:284px;font-size:11px;line-height:11px;color:#000;font-weight:normal;transform:scaleX(0.9807);transform-origin:0 0;">0,000</div>
<div class="t" style="left:974px;top:284px;font-size:11px;line-height:11px;color:#000;font-weight:normal;transform:scaleX(0.8557);transform-origin:0 0;">MODUL</div>
<div class="t" style="left:1202px;top:284px;font-size:11px;line-height:11px;color:#000;font-weight:normal;transform:scaleX(0.9727);transform-origin:0 0;">0,04</div>
<div style="position:absolute;left:1278px;top:282px;width:1px;height:13px;background:#bdbdbd;"></div>
<div style="position:absolute;left:1198px;top:300px;width:42px;height:20px;background:#adff2f;"></div>
<div style="position:absolute;left:245px;top:320px;width:1034px;height:1px;background:#d8d4cc;"></div>
<div class="t" style="left:249px;top:305px;font-size:11px;line-height:11px;color:#000;font-weight:normal;transform:scaleX(0.8570);transform-origin:0 0;">MOD</div>
<div class="t" style="left:292px;top:305px;font-size:11px;line-height:11px;color:#000;font-weight:normal;">1</div>
<div class="t" style="left:334px;top:305px;font-size:11px;line-height:11px;color:#000;font-weight:normal;transform:scaleX(0.9726);transform-origin:0 0;">1001</div>
<div class="t" style="left:383px;top:305px;font-size:11px;line-height:11px;color:#000;font-weight:normal;transform:scaleX(0.9274);transform-origin:0 0;">TOOL_003</div>
<div class="t" style="left:499px;top:305px;font-size:11px;line-height:11px;color:#000;font-weight:normal;transform:scaleX(0.9812);transform-origin:0 0;">Plug for timing the tool</div>
<div class="t" style="left:730px;top:305px;font-size:11px;line-height:11px;color:#000;font-weight:normal;transform:scaleX(0.9807);transform-origin:0 0;">0,000</div>
<div class="t" style="left:790px;top:305px;font-size:11px;line-height:11px;color:#000;font-weight:normal;transform:scaleX(0.9807);transform-origin:0 0;">0,000</div>
<div class="t" style="left:889px;top:305px;font-size:11px;line-height:11px;color:#000;font-weight:normal;transform:scaleX(0.9807);transform-origin:0 0;">0,000</div>
<div class="t" style="left:974px;top:305px;font-size:11px;line-height:11px;color:#000;font-weight:normal;transform:scaleX(0.8557);transform-origin:0 0;">MODUL</div>
<div class="t" style="left:1202px;top:305px;font-size:11px;line-height:11px;color:#000;font-weight:normal;transform:scaleX(1.0270);transform-origin:0 0;">0,00</div>
<div style="position:absolute;left:1278px;top:303px;width:1px;height:13px;background:#bdbdbd;"></div>
<div style="position:absolute;left:1198px;top:321px;width:42px;height:20px;background:#ffff00;"></div>
<div style="position:absolute;left:245px;top:341px;width:1034px;height:1px;background:#d8d4cc;"></div>
<div class="t" style="left:249px;top:326px;font-size:11px;line-height:11px;color:#000;font-weight:normal;transform:scaleX(0.8570);transform-origin:0 0;">MOD</div>
<div class="t" style="left:292px;top:326px;font-size:11px;line-height:11px;color:#000;font-weight:normal;">1</div>
<div class="t" style="left:334px;top:326px;font-size:11px;line-height:11px;color:#000;font-weight:normal;transform:scaleX(0.9726);transform-origin:0 0;">1001</div>
<div class="t" style="left:383px;top:326px;font-size:11px;line-height:11px;color:#000;font-weight:normal;transform:scaleX(0.9274);transform-origin:0 0;">TOOL_002</div>
<div class="t" style="left:499px;top:326px;font-size:11px;line-height:11px;color:#000;font-weight:normal;">Tox screw for lock insert</div>
<div class="t" style="left:730px;top:326px;font-size:11px;line-height:11px;color:#000;font-weight:normal;transform:scaleX(0.9731);transform-origin:0 0;">2,000</div>
<div class="t" style="left:790px;top:326px;font-size:11px;line-height:11px;color:#000;font-weight:normal;transform:scaleX(0.9807);transform-origin:0 0;">0,000</div>
<div class="t" style="left:889px;top:326px;font-size:11px;line-height:11px;color:#000;font-weight:normal;transform:scaleX(0.9807);transform-origin:0 0;">0,000</div>
<div class="t" style="left:974px;top:326px;font-size:11px;line-height:11px;color:#000;font-weight:normal;transform:scaleX(0.8557);transform-origin:0 0;">MODUL</div>
<div class="t" style="left:1202px;top:326px;font-size:11px;line-height:11px;color:#000;font-weight:normal;transform:scaleX(0.9727);transform-origin:0 0;">0,02</div>
<div style="position:absolute;left:1278px;top:324px;width:1px;height:13px;background:#bdbdbd;"></div>
<div style="position:absolute;left:1198px;top:342px;width:42px;height:20px;background:#ffff00;"></div>
<div style="position:absolute;left:245px;top:362px;width:1034px;height:1px;background:#d8d4cc;"></div>
<div class="t" style="left:249px;top:347px;font-size:11px;line-height:11px;color:#000;font-weight:normal;transform:scaleX(0.8570);transform-origin:0 0;">MOD</div>
<div class="t" style="left:292px;top:347px;font-size:11px;line-height:11px;color:#000;font-weight:normal;">1</div>
<div class="t" style="left:334px;top:347px;font-size:11px;line-height:11px;color:#000;font-weight:normal;transform:scaleX(0.9726);transform-origin:0 0;">1001</div>
<div class="t" style="left:383px;top:347px;font-size:11px;line-height:11px;color:#000;font-weight:normal;transform:scaleX(0.9274);transform-origin:0 0;">TOOL_001</div>
<div class="t" style="left:499px;top:347px;font-size:11px;line-height:11px;color:#000;font-weight:normal;transform:scaleX(0.9826);transform-origin:0 0;">Item For Slotting</div>
<div class="t" style="left:730px;top:347px;font-size:11px;line-height:11px;color:#000;font-weight:normal;transform:scaleX(0.9731);transform-origin:0 0;">2,000</div>
<div class="t" style="left:790px;top:347px;font-size:11px;line-height:11px;color:#000;font-weight:normal;transform:scaleX(0.9807);transform-origin:0 0;">0,000</div>
<div class="t" style="left:889px;top:347px;font-size:11px;line-height:11px;color:#000;font-weight:normal;transform:scaleX(0.9807);transform-origin:0 0;">0,000</div>
<div class="t" style="left:974px;top:347px;font-size:11px;line-height:11px;color:#000;font-weight:normal;transform:scaleX(0.8557);transform-origin:0 0;">MODUL</div>
<div class="t" style="left:1202px;top:347px;font-size:11px;line-height:11px;color:#000;font-weight:normal;transform:scaleX(0.9727);transform-origin:0 0;">0,02</div>
<div style="position:absolute;left:1278px;top:345px;width:1px;height:13px;background:#bdbdbd;"></div>
<div style="position:absolute;left:1198px;top:363px;width:42px;height:20px;background:#ff0000;"></div>
<div style="position:absolute;left:245px;top:383px;width:1034px;height:1px;background:#d8d4cc;"></div>
<div class="t" style="left:249px;top:368px;font-size:11px;line-height:11px;color:#000;font-weight:normal;transform:scaleX(0.8570);transform-origin:0 0;">MOD</div>
<div class="t" style="left:292px;top:368px;font-size:11px;line-height:11px;color:#000;font-weight:normal;">1</div>
<div class="t" style="left:334px;top:368px;font-size:11px;line-height:11px;color:#000;font-weight:normal;transform:scaleX(0.9726);transform-origin:0 0;">1001</div>
<div class="t" style="left:383px;top:368px;font-size:11px;line-height:11px;color:#000;font-weight:normal;transform:scaleX(0.9239);transform-origin:0 0;">SACK_001</div>
<div class="t" style="left:499px;top:368px;font-size:11px;line-height:11px;color:#000;font-weight:normal;transform:scaleX(0.9770);transform-origin:0 0;">Plastic material for extrusion</div>
<div class="t" style="left:730px;top:368px;font-size:11px;line-height:11px;color:#000;font-weight:normal;transform:scaleX(0.9808);transform-origin:0 0;">30000,000</div>
<div class="t" style="left:790px;top:368px;font-size:11px;line-height:11px;color:#000;font-weight:normal;transform:scaleX(0.9807);transform-origin:0 0;">0,000</div>
<div class="t" style="left:889px;top:368px;font-size:11px;line-height:11px;color:#000;font-weight:normal;transform:scaleX(0.9807);transform-origin:0 0;">0,000</div>
<div class="t" style="left:974px;top:368px;font-size:11px;line-height:11px;color:#000;font-weight:normal;transform:scaleX(0.8557);transform-origin:0 0;">MODUL</div>
<div class="t" style="left:1202px;top:368px;font-size:11px;line-height:11px;color:#000;font-weight:normal;transform:scaleX(0.9508);transform-origin:0 0;">100,00</div>
<div style="position:absolute;left:1278px;top:366px;width:1px;height:13px;background:#bdbdbd;"></div>
<div style="position:absolute;left:1198px;top:384px;width:42px;height:20px;background:#ffff00;"></div>
<div style="position:absolute;left:245px;top:404px;width:1034px;height:1px;background:#d8d4cc;"></div>
<div class="t" style="left:249px;top:389px;font-size:11px;line-height:11px;color:#000;font-weight:normal;transform:scaleX(0.8570);transform-origin:0 0;">MOD</div>
<div class="t" style="left:292px;top:389px;font-size:11px;line-height:11px;color:#000;font-weight:normal;">1</div>
<div class="t" style="left:334px;top:389px;font-size:11px;line-height:11px;color:#000;font-weight:normal;transform:scaleX(0.9726);transform-origin:0 0;">1001</div>
<div class="t" style="left:383px;top:389px;font-size:11px;line-height:11px;color:#000;font-weight:normal;transform:scaleX(0.8843);transform-origin:0 0;">LIGHT_BULB</div>
<div class="t" style="left:499px;top:389px;font-size:11px;line-height:11px;color:#000;font-weight:normal;transform:scaleX(0.9493);transform-origin:0 0;">Light bulb</div>
<div class="t" style="left:730px;top:389px;font-size:11px;line-height:11px;color:#000;font-weight:normal;transform:scaleX(0.9731);transform-origin:0 0;">600,000</div>
<div class="t" style="left:790px;top:389px;font-size:11px;line-height:11px;color:#000;font-weight:normal;transform:scaleX(0.9807);transform-origin:0 0;">0,000</div>
<div class="t" style="left:889px;top:389px;font-size:11px;line-height:11px;color:#000;font-weight:normal;transform:scaleX(0.9807);transform-origin:0 0;">0,000</div>
<div class="t" style="left:974px;top:389px;font-size:11px;line-height:11px;color:#000;font-weight:normal;transform:scaleX(0.8557);transform-origin:0 0;">MODUL</div>
<div class="t" style="left:1084px;top:389px;font-size:11px;line-height:11px;color:#000;font-weight:normal;">Qty per box = 100 Pcs</div>
<div class="t" style="left:1202px;top:389px;font-size:11px;line-height:11px;color:#000;font-weight:normal;transform:scaleX(0.9727);transform-origin:0 0;">6,00</div>
<div style="position:absolute;left:1278px;top:387px;width:1px;height:13px;background:#bdbdbd;"></div>
<div style="position:absolute;left:1198px;top:405px;width:42px;height:20px;background:#ffff00;"></div>
<div style="position:absolute;left:245px;top:425px;width:1034px;height:1px;background:#d8d4cc;"></div>
<div class="t" style="left:249px;top:410px;font-size:11px;line-height:11px;color:#000;font-weight:normal;transform:scaleX(0.8570);transform-origin:0 0;">MOD</div>
<div class="t" style="left:292px;top:410px;font-size:11px;line-height:11px;color:#000;font-weight:normal;">1</div>
<div class="t" style="left:334px;top:410px;font-size:11px;line-height:11px;color:#000;font-weight:normal;transform:scaleX(0.9726);transform-origin:0 0;">1001</div>
<div class="t" style="left:383px;top:410px;font-size:11px;line-height:11px;color:#000;font-weight:normal;transform:scaleX(0.8843);transform-origin:0 0;">LIGHT_BULB</div>
<div class="t" style="left:499px;top:410px;font-size:11px;line-height:11px;color:#000;font-weight:normal;transform:scaleX(0.9493);transform-origin:0 0;">Light bulb</div>
<div class="t" style="left:730px;top:410px;font-size:11px;line-height:11px;color:#000;font-weight:normal;transform:scaleX(0.9731);transform-origin:0 0;">600,000</div>
<div class="t" style="left:790px;top:410px;font-size:11px;line-height:11px;color:#000;font-weight:normal;transform:scaleX(0.9807);transform-origin:0 0;">0,000</div>
<div class="t" style="left:889px;top:410px;font-size:11px;line-height:11px;color:#000;font-weight:normal;transform:scaleX(0.9807);transform-origin:0 0;">0,000</div>
<div class="t" style="left:974px;top:410px;font-size:11px;line-height:11px;color:#000;font-weight:normal;transform:scaleX(0.8557);transform-origin:0 0;">MODUL</div>
<div class="t" style="left:1084px;top:410px;font-size:11px;line-height:11px;color:#000;font-weight:normal;">Qty per box = 100 Pcs</div>
<div class="t" style="left:1202px;top:410px;font-size:11px;line-height:11px;color:#000;font-weight:normal;transform:scaleX(0.9727);transform-origin:0 0;">6,00</div>
<div style="position:absolute;left:1278px;top:408px;width:1px;height:13px;background:#bdbdbd;"></div>
<div style="position:absolute;left:1198px;top:426px;width:42px;height:20px;background:#adff2f;"></div>
<div style="position:absolute;left:245px;top:446px;width:1034px;height:1px;background:#d8d4cc;"></div>
<div class="t" style="left:249px;top:431px;font-size:11px;line-height:11px;color:#000;font-weight:normal;transform:scaleX(0.8570);transform-origin:0 0;">MOD</div>
<div class="t" style="left:292px;top:431px;font-size:11px;line-height:11px;color:#000;font-weight:normal;">1</div>
<div class="t" style="left:334px;top:431px;font-size:11px;line-height:11px;color:#000;font-weight:normal;transform:scaleX(0.9726);transform-origin:0 0;">1001</div>
<div class="t" style="left:383px;top:431px;font-size:11px;line-height:11px;color:#000;font-weight:normal;transform:scaleX(0.9199);transform-origin:0 0;">COD0003</div>
<div class="t" style="left:499px;top:431px;font-size:11px;line-height:11px;color:#000;font-weight:normal;">Item 003</div>
<div class="t" style="left:730px;top:431px;font-size:11px;line-height:11px;color:#000;font-weight:normal;transform:scaleX(0.9807);transform-origin:0 0;">0,000</div>
<div class="t" style="left:790px;top:431px;font-size:11px;line-height:11px;color:#000;font-weight:normal;transform:scaleX(0.9807);transform-origin:0 0;">0,000</div>
<div class="t" style="left:889px;top:431px;font-size:11px;line-height:11px;color:#000;font-weight:normal;transform:scaleX(0.9807);transform-origin:0 0;">0,000</div>
<div class="t" style="left:974px;top:431px;font-size:11px;line-height:11px;color:#000;font-weight:normal;transform:scaleX(0.8557);transform-origin:0 0;">MODUL</div>
<div class="t" style="left:1202px;top:431px;font-size:11px;line-height:11px;color:#000;font-weight:normal;transform:scaleX(1.0270);transform-origin:0 0;">0,00</div>
<div style="position:absolute;left:1278px;top:429px;width:1px;height:13px;background:#bdbdbd;"></div>
<div style="position:absolute;left:1198px;top:447px;width:42px;height:20px;background:#ffff00;"></div>
<div style="position:absolute;left:245px;top:467px;width:1034px;height:1px;background:#d8d4cc;"></div>
<div class="t" style="left:249px;top:452px;font-size:11px;line-height:11px;color:#000;font-weight:normal;transform:scaleX(0.8570);transform-origin:0 0;">MOD</div>
<div class="t" style="left:292px;top:452px;font-size:11px;line-height:11px;color:#000;font-weight:normal;">1</div>
<div class="t" style="left:334px;top:452px;font-size:11px;line-height:11px;color:#000;font-weight:normal;transform:scaleX(0.9726);transform-origin:0 0;">1001</div>
<div class="t" style="left:383px;top:452px;font-size:11px;line-height:11px;color:#000;font-weight:normal;transform:scaleX(0.9199);transform-origin:0 0;">COD0002</div>
<div class="t" style="left:499px;top:452px;font-size:11px;line-height:11px;color:#000;font-weight:normal;transform:scaleX(0.9837);transform-origin:0 0;">Item 002</div>
<div class="t" style="left:730px;top:452px;font-size:11px;line-height:11px;color:#000;font-weight:normal;transform:scaleX(0.9730);transform-origin:0 0;">2000,000</div>
<div class="t" style="left:790px;top:452px;font-size:11px;line-height:11px;color:#000;font-weight:normal;transform:scaleX(0.9807);transform-origin:0 0;">0,000</div>
<div class="t" style="left:889px;top:452px;font-size:11px;line-height:11px;color:#000;font-weight:normal;transform:scaleX(0.9807);transform-origin:0 0;">0,000</div>
<div class="t" style="left:974px;top:452px;font-size:11px;line-height:11px;color:#000;font-weight:normal;transform:scaleX(0.8557);transform-origin:0 0;">MODUL</div>
<div class="t" style="left:1202px;top:452px;font-size:11px;line-height:11px;color:#000;font-weight:normal;transform:scaleX(0.9731);transform-origin:0 0;">20,00</div>
<div style="position:absolute;left:1278px;top:450px;width:1px;height:13px;background:#bdbdbd;"></div>
<div style="position:absolute;left:245px;top:468px;width:1034px;height:20px;background:#10296b;"></div>
<div style="position:absolute;left:245px;top:488px;width:1034px;height:1px;background:#d8d4cc;"></div>
<div class="t" style="left:249px;top:473px;font-size:11px;line-height:11px;color:#fff;font-weight:normal;transform:scaleX(0.8570);transform-origin:0 0;">MOD</div>
<div class="t" style="left:292px;top:473px;font-size:11px;line-height:11px;color:#fff;font-weight:normal;">1</div>
<div class="t" style="left:334px;top:473px;font-size:11px;line-height:11px;color:#fff;font-weight:normal;transform:scaleX(0.9726);transform-origin:0 0;">1001</div>
<div class="t" style="left:383px;top:473px;font-size:11px;line-height:11px;color:#fff;font-weight:normal;transform:scaleX(0.9199);transform-origin:0 0;">COD0001</div>
<div class="t" style="left:499px;top:473px;font-size:11px;line-height:11px;color:#fff;font-weight:normal;transform:scaleX(0.9837);transform-origin:0 0;">Item 001</div>
<div class="t" style="left:730px;top:473px;font-size:11px;line-height:11px;color:#fff;font-weight:normal;transform:scaleX(0.9730);transform-origin:0 0;">1000,000</div>
<div class="t" style="left:790px;top:473px;font-size:11px;line-height:11px;color:#fff;font-weight:normal;transform:scaleX(0.9807);transform-origin:0 0;">0,000</div>
<div class="t" style="left:889px;top:473px;font-size:11px;line-height:11px;color:#fff;font-weight:normal;transform:scaleX(0.9807);transform-origin:0 0;">0,000</div>
<div class="t" style="left:974px;top:473px;font-size:11px;line-height:11px;color:#fff;font-weight:normal;transform:scaleX(0.8557);transform-origin:0 0;">MODUL</div>
<div class="t" style="left:1202px;top:473px;font-size:11px;line-height:11px;color:#fff;font-weight:normal;transform:scaleX(0.9731);transform-origin:0 0;">10,00</div>
<div style="position:absolute;left:1278px;top:471px;width:1px;height:13px;background:#bdbdbd;"></div>
<div style="position:absolute;left:1198px;top:489px;width:42px;height:20px;background:#ffff00;"></div>
<div style="position:absolute;left:245px;top:509px;width:1034px;height:1px;background:#d8d4cc;"></div>
<div class="t" style="left:249px;top:494px;font-size:11px;line-height:11px;color:#000;font-weight:normal;transform:scaleX(0.8570);transform-origin:0 0;">MOD</div>
<div class="t" style="left:292px;top:494px;font-size:11px;line-height:11px;color:#000;font-weight:normal;">1</div>
<div class="t" style="left:334px;top:494px;font-size:11px;line-height:11px;color:#000;font-weight:normal;transform:scaleX(0.9726);transform-origin:0 0;">1001</div>
<div class="t" style="left:383px;top:494px;font-size:11px;line-height:11px;color:#000;font-weight:normal;transform:scaleX(0.9512);transform-origin:0 0;">COD_FIFO_0003</div>
<div class="t" style="left:499px;top:494px;font-size:11px;line-height:11px;color:#000;font-weight:normal;">Fifo test code 0003</div>
<div class="t" style="left:730px;top:494px;font-size:11px;line-height:11px;color:#000;font-weight:normal;transform:scaleX(0.9731);transform-origin:0 0;">700,000</div>
<div class="t" style="left:790px;top:494px;font-size:11px;line-height:11px;color:#000;font-weight:normal;transform:scaleX(0.9807);transform-origin:0 0;">0,000</div>
<div class="t" style="left:889px;top:494px;font-size:11px;line-height:11px;color:#000;font-weight:normal;transform:scaleX(0.9807);transform-origin:0 0;">0,000</div>
<div class="t" style="left:974px;top:494px;font-size:11px;line-height:11px;color:#000;font-weight:normal;transform:scaleX(0.8557);transform-origin:0 0;">MODUL</div>
<div class="t" style="left:1202px;top:494px;font-size:11px;line-height:11px;color:#000;font-weight:normal;transform:scaleX(0.9727);transform-origin:0 0;">7,00</div>
<div style="position:absolute;left:1278px;top:492px;width:1px;height:13px;background:#bdbdbd;"></div>
<div style="position:absolute;left:1198px;top:510px;width:42px;height:20px;background:#ffff00;"></div>
<div style="position:absolute;left:245px;top:530px;width:1034px;height:1px;background:#d8d4cc;"></div>
<div class="t" style="left:249px;top:515px;font-size:11px;line-height:11px;color:#000;font-weight:normal;transform:scaleX(0.8570);transform-origin:0 0;">MOD</div>
<div class="t" style="left:292px;top:515px;font-size:11px;line-height:11px;color:#000;font-weight:normal;">1</div>
<div class="t" style="left:334px;top:515px;font-size:11px;line-height:11px;color:#000;font-weight:normal;transform:scaleX(0.9726);transform-origin:0 0;">1001</div>
<div class="t" style="left:383px;top:515px;font-size:11px;line-height:11px;color:#000;font-weight:normal;transform:scaleX(0.9242);transform-origin:0 0;">COD_FIFO_0002</div>
<div class="t" style="left:499px;top:515px;font-size:11px;line-height:11px;color:#000;font-weight:normal;">Fifo test code 0002</div>
<div class="t" style="left:730px;top:515px;font-size:11px;line-height:11px;color:#000;font-weight:normal;transform:scaleX(0.9731);transform-origin:0 0;">600,000</div>
<div class="t" style="left:790px;top:515px;font-size:11px;line-height:11px;color:#000;font-weight:normal;transform:scaleX(0.9807);transform-origin:0 0;">0,000</div>
<div class="t" style="left:889px;top:515px;font-size:11px;line-height:11px;color:#000;font-weight:normal;transform:scaleX(0.9807);transform-origin:0 0;">0,000</div>
<div class="t" style="left:974px;top:515px;font-size:11px;line-height:11px;color:#000;font-weight:normal;transform:scaleX(0.8557);transform-origin:0 0;">MODUL</div>
<div class="t" style="left:1202px;top:515px;font-size:11px;line-height:11px;color:#000;font-weight:normal;transform:scaleX(0.9727);transform-origin:0 0;">6,00</div>
<div style="position:absolute;left:1278px;top:513px;width:1px;height:13px;background:#bdbdbd;"></div>
<div style="position:absolute;left:1198px;top:531px;width:42px;height:20px;background:#ff00ff;"></div>
<div style="position:absolute;left:245px;top:551px;width:1034px;height:1px;background:#d8d4cc;"></div>
<div class="t" style="left:249px;top:536px;font-size:11px;line-height:11px;color:#000;font-weight:normal;transform:scaleX(0.8570);transform-origin:0 0;">MOD</div>
<div class="t" style="left:292px;top:536px;font-size:11px;line-height:11px;color:#000;font-weight:normal;">1</div>
<div class="t" style="left:334px;top:536px;font-size:11px;line-height:11px;color:#000;font-weight:normal;transform:scaleX(0.9726);transform-origin:0 0;">1001</div>
<div class="t" style="left:383px;top:536px;font-size:11px;line-height:11px;color:#000;font-weight:normal;transform:scaleX(0.9242);transform-origin:0 0;">COD_FIFO_0001</div>
<div class="t" style="left:499px;top:536px;font-size:11px;line-height:11px;color:#000;font-weight:normal;">Fifo test code 0001</div>
<div class="t" style="left:730px;top:536px;font-size:11px;line-height:11px;color:#000;font-weight:normal;transform:scaleX(0.9730);transform-origin:0 0;">7000,000</div>
<div class="t" style="left:790px;top:536px;font-size:11px;line-height:11px;color:#000;font-weight:normal;transform:scaleX(0.9807);transform-origin:0 0;">0,000</div>
<div class="t" style="left:889px;top:536px;font-size:11px;line-height:11px;color:#000;font-weight:normal;transform:scaleX(0.9807);transform-origin:0 0;">0,000</div>
<div class="t" style="left:974px;top:536px;font-size:11px;line-height:11px;color:#000;font-weight:normal;transform:scaleX(0.8557);transform-origin:0 0;">MODUL</div>
<div class="t" style="left:1202px;top:536px;font-size:11px;line-height:11px;color:#000;font-weight:normal;transform:scaleX(0.9731);transform-origin:0 0;">70,00</div>
<div style="position:absolute;left:1278px;top:534px;width:1px;height:13px;background:#bdbdbd;"></div>
<div style="position:absolute;left:1198px;top:552px;width:42px;height:20px;background:#ff0000;"></div>
<div style="position:absolute;left:245px;top:572px;width:1034px;height:1px;background:#d8d4cc;"></div>
<div class="t" style="left:249px;top:557px;font-size:11px;line-height:11px;color:#000;font-weight:normal;transform:scaleX(0.8570);transform-origin:0 0;">MOD</div>
<div class="t" style="left:292px;top:557px;font-size:11px;line-height:11px;color:#000;font-weight:normal;">1</div>
<div class="t" style="left:334px;top:557px;font-size:11px;line-height:11px;color:#000;font-weight:normal;transform:scaleX(0.9726);transform-origin:0 0;">1001</div>
<div class="t" style="left:383px;top:557px;font-size:11px;line-height:11px;color:#000;font-weight:normal;transform:scaleX(0.9058);transform-origin:0 0;">COD_EXTERNAL_0001</div>
<div class="t" style="left:499px;top:557px;font-size:11px;line-height:11px;color:#000;font-weight:normal;transform:scaleX(0.9768);transform-origin:0 0;">Item on racks system 0001</div>
<div class="t" style="left:730px;top:557px;font-size:11px;line-height:11px;color:#000;font-weight:normal;transform:scaleX(0.9732);transform-origin:0 0;">10000,000</div>
<div class="t" style="left:790px;top:557px;font-size:11px;line-height:11px;color:#000;font-weight:normal;transform:scaleX(0.9807);transform-origin:0 0;">0,000</div>
<div class="t" style="left:889px;top:557px;font-size:11px;line-height:11px;color:#000;font-weight:normal;transform:scaleX(0.9807);transform-origin:0 0;">0,000</div>
<div class="t" style="left:974px;top:557px;font-size:11px;line-height:11px;color:#000;font-weight:normal;transform:scaleX(0.8557);transform-origin:0 0;">MODUL</div>
<div class="t" style="left:1202px;top:557px;font-size:11px;line-height:11px;color:#000;font-weight:normal;transform:scaleX(0.9508);transform-origin:0 0;">100,00</div>
<div style="position:absolute;left:1278px;top:555px;width:1px;height:13px;background:#bdbdbd;"></div>
<div style="position:absolute;left:1198px;top:573px;width:42px;height:20px;background:#ff00ff;"></div>
<div style="position:absolute;left:245px;top:593px;width:1034px;height:1px;background:#d8d4cc;"></div>
<div class="t" style="left:249px;top:578px;font-size:11px;line-height:11px;color:#000;font-weight:normal;transform:scaleX(0.8570);transform-origin:0 0;">MOD</div>
<div class="t" style="left:292px;top:578px;font-size:11px;line-height:11px;color:#000;font-weight:normal;">1</div>
<div class="t" style="left:334px;top:578px;font-size:11px;line-height:11px;color:#000;font-weight:normal;transform:scaleX(0.9726);transform-origin:0 0;">1001</div>
<div class="t" style="left:383px;top:578px;font-size:11px;line-height:11px;color:#000;font-weight:normal;transform:scaleX(0.8945);transform-origin:0 0;">CNC_ASSEMBLY_001</div>
<div class="t" style="left:499px;top:578px;font-size:11px;line-height:11px;color:#000;font-weight:normal;transform:scaleX(0.8969);transform-origin:0 0;">BROACHING TOOL</div>
<div class="t" style="left:730px;top:578px;font-size:11px;line-height:11px;color:#000;font-weight:normal;transform:scaleX(0.9730);transform-origin:0 0;">8000,000</div>
<div class="t" style="left:790px;top:578px;font-size:11px;line-height:11px;color:#000;font-weight:normal;transform:scaleX(0.9807);transform-origin:0 0;">0,000</div>
<div class="t" style="left:889px;top:578px;font-size:11px;line-height:11px;color:#000;font-weight:normal;transform:scaleX(0.9807);transform-origin:0 0;">0,000</div>
<div class="t" style="left:974px;top:578px;font-size:11px;line-height:11px;color:#000;font-weight:normal;transform:scaleX(0.8557);transform-origin:0 0;">MODUL</div>
<div class="t" style="left:1202px;top:578px;font-size:11px;line-height:11px;color:#000;font-weight:normal;transform:scaleX(0.9731);transform-origin:0 0;">80,00</div>
<div style="position:absolute;left:1278px;top:576px;width:1px;height:13px;background:#bdbdbd;"></div>
<div style="position:absolute;left:245px;top:614px;width:1034px;height:1px;background:#d8d4cc;"></div>
<div class="t" style="left:249px;top:599px;font-size:11px;line-height:11px;color:#000;font-weight:normal;transform:scaleX(0.8570);transform-origin:0 0;">MOD</div>
<div class="t" style="left:292px;top:599px;font-size:11px;line-height:11px;color:#000;font-weight:normal;">1</div>
<div class="t" style="left:334px;top:599px;font-size:11px;line-height:11px;color:#000;font-weight:normal;transform:scaleX(0.9726);transform-origin:0 0;">1001</div>
<div class="t" style="left:730px;top:599px;font-size:11px;line-height:11px;color:#000;font-weight:normal;transform:scaleX(0.9807);transform-origin:0 0;">0,000</div>
<div class="t" style="left:790px;top:599px;font-size:11px;line-height:11px;color:#000;font-weight:normal;transform:scaleX(0.9807);transform-origin:0 0;">0,000</div>
<div class="t" style="left:889px;top:599px;font-size:11px;line-height:11px;color:#000;font-weight:normal;transform:scaleX(0.9807);transform-origin:0 0;">0,000</div>
<div class="t" style="left:974px;top:599px;font-size:11px;line-height:11px;color:#000;font-weight:normal;transform:scaleX(0.8557);transform-origin:0 0;">MODUL</div>
<div style="position:absolute;left:1278px;top:597px;width:1px;height:13px;background:#bdbdbd;"></div>
<div style="position:absolute;left:245px;top:635px;width:1034px;height:1px;background:#d8d4cc;"></div>
<div class="t" style="left:249px;top:620px;font-size:11px;line-height:11px;color:#000;font-weight:normal;transform:scaleX(0.8570);transform-origin:0 0;">MOD</div>
<div class="t" style="left:292px;top:620px;font-size:11px;line-height:11px;color:#000;font-weight:normal;">1</div>
<div class="t" style="left:334px;top:620px;font-size:11px;line-height:11px;color:#000;font-weight:normal;transform:scaleX(0.9726);transform-origin:0 0;">1001</div>
<div class="t" style="left:730px;top:620px;font-size:11px;line-height:11px;color:#000;font-weight:normal;transform:scaleX(0.9807);transform-origin:0 0;">0,000</div>
<div class="t" style="left:790px;top:620px;font-size:11px;line-height:11px;color:#000;font-weight:normal;transform:scaleX(0.9807);transform-origin:0 0;">0,000</div>
<div class="t" style="left:889px;top:620px;font-size:11px;line-height:11px;color:#000;font-weight:normal;transform:scaleX(0.9807);transform-origin:0 0;">0,000</div>
<div class="t" style="left:974px;top:620px;font-size:11px;line-height:11px;color:#000;font-weight:normal;transform:scaleX(0.8557);transform-origin:0 0;">MODUL</div>
<div style="position:absolute;left:1278px;top:618px;width:1px;height:13px;background:#bdbdbd;"></div>
<div style="position:absolute;left:245px;top:656px;width:1034px;height:1px;background:#d8d4cc;"></div>
<div class="t" style="left:249px;top:641px;font-size:11px;line-height:11px;color:#000;font-weight:normal;transform:scaleX(0.8570);transform-origin:0 0;">MOD</div>
<div class="t" style="left:292px;top:641px;font-size:11px;line-height:11px;color:#000;font-weight:normal;">1</div>
<div class="t" style="left:334px;top:641px;font-size:11px;line-height:11px;color:#000;font-weight:normal;transform:scaleX(0.9726);transform-origin:0 0;">1001</div>
<div class="t" style="left:730px;top:641px;font-size:11px;line-height:11px;color:#000;font-weight:normal;transform:scaleX(0.9807);transform-origin:0 0;">0,000</div>
<div class="t" style="left:790px;top:641px;font-size:11px;line-height:11px;color:#000;font-weight:normal;transform:scaleX(0.9807);transform-origin:0 0;">0,000</div>
<div class="t" style="left:889px;top:641px;font-size:11px;line-height:11px;color:#000;font-weight:normal;transform:scaleX(0.9807);transform-origin:0 0;">0,000</div>
<div class="t" style="left:974px;top:641px;font-size:11px;line-height:11px;color:#000;font-weight:normal;transform:scaleX(0.8557);transform-origin:0 0;">MODUL</div>
<div style="position:absolute;left:1278px;top:639px;width:1px;height:13px;background:#bdbdbd;"></div>
<div style="position:absolute;left:245px;top:677px;width:1034px;height:1px;background:#d8d4cc;"></div>
<div class="t" style="left:249px;top:662px;font-size:11px;line-height:11px;color:#000;font-weight:normal;transform:scaleX(0.8570);transform-origin:0 0;">MOD</div>
<div class="t" style="left:292px;top:662px;font-size:11px;line-height:11px;color:#000;font-weight:normal;">1</div>
<div class="t" style="left:334px;top:662px;font-size:11px;line-height:11px;color:#000;font-weight:normal;transform:scaleX(0.9726);transform-origin:0 0;">1001</div>
<div class="t" style="left:730px;top:662px;font-size:11px;line-height:11px;color:#000;font-weight:normal;transform:scaleX(0.9807);transform-origin:0 0;">0,000</div>
<div class="t" style="left:790px;top:662px;font-size:11px;line-height:11px;color:#000;font-weight:normal;transform:scaleX(0.9807);transform-origin:0 0;">0,000</div>
<div class="t" style="left:889px;top:662px;font-size:11px;line-height:11px;color:#000;font-weight:normal;transform:scaleX(0.9807);transform-origin:0 0;">0,000</div>
<div class="t" style="left:974px;top:662px;font-size:11px;line-height:11px;color:#000;font-weight:normal;transform:scaleX(0.8557);transform-origin:0 0;">MODUL</div>
<div style="position:absolute;left:1278px;top:660px;width:1px;height:13px;background:#bdbdbd;"></div>
<div style="position:absolute;left:245px;top:698px;width:1034px;height:1px;background:#d8d4cc;"></div>
<div class="t" style="left:249px;top:683px;font-size:11px;line-height:11px;color:#000;font-weight:normal;transform:scaleX(0.8570);transform-origin:0 0;">MOD</div>
<div class="t" style="left:292px;top:683px;font-size:11px;line-height:11px;color:#000;font-weight:normal;">1</div>
<div class="t" style="left:334px;top:683px;font-size:11px;line-height:11px;color:#000;font-weight:normal;transform:scaleX(0.9726);transform-origin:0 0;">1001</div>
<div class="t" style="left:730px;top:683px;font-size:11px;line-height:11px;color:#000;font-weight:normal;transform:scaleX(0.9807);transform-origin:0 0;">0,000</div>
<div class="t" style="left:790px;top:683px;font-size:11px;line-height:11px;color:#000;font-weight:normal;transform:scaleX(0.9807);transform-origin:0 0;">0,000</div>
<div class="t" style="left:889px;top:683px;font-size:11px;line-height:11px;color:#000;font-weight:normal;transform:scaleX(0.9807);transform-origin:0 0;">0,000</div>
<div class="t" style="left:974px;top:683px;font-size:11px;line-height:11px;color:#000;font-weight:normal;transform:scaleX(0.8557);transform-origin:0 0;">MODUL</div>
<div style="position:absolute;left:1278px;top:681px;width:1px;height:13px;background:#bdbdbd;"></div>
<div style="position:absolute;left:245px;top:719px;width:1034px;height:1px;background:#d8d4cc;"></div>
<div class="t" style="left:249px;top:704px;font-size:11px;line-height:11px;color:#000;font-weight:normal;transform:scaleX(0.8570);transform-origin:0 0;">MOD</div>
<div class="t" style="left:292px;top:704px;font-size:11px;line-height:11px;color:#000;font-weight:normal;">1</div>
<div class="t" style="left:334px;top:704px;font-size:11px;line-height:11px;color:#000;font-weight:normal;transform:scaleX(0.9726);transform-origin:0 0;">1001</div>
<div class="t" style="left:730px;top:704px;font-size:11px;line-height:11px;color:#000;font-weight:normal;transform:scaleX(0.9807);transform-origin:0 0;">0,000</div>
<div class="t" style="left:790px;top:704px;font-size:11px;line-height:11px;color:#000;font-weight:normal;transform:scaleX(0.9807);transform-origin:0 0;">0,000</div>
<div class="t" style="left:889px;top:704px;font-size:11px;line-height:11px;color:#000;font-weight:normal;transform:scaleX(0.9807);transform-origin:0 0;">0,000</div>
<div class="t" style="left:974px;top:704px;font-size:11px;line-height:11px;color:#000;font-weight:normal;transform:scaleX(0.8557);transform-origin:0 0;">MODUL</div>
<div style="position:absolute;left:1278px;top:702px;width:1px;height:13px;background:#bdbdbd;"></div>
<div style="position:absolute;left:245px;top:740px;width:1034px;height:1px;background:#d8d4cc;"></div>
<div class="t" style="left:249px;top:725px;font-size:11px;line-height:11px;color:#000;font-weight:normal;transform:scaleX(0.8570);transform-origin:0 0;">MOD</div>
<div class="t" style="left:292px;top:725px;font-size:11px;line-height:11px;color:#000;font-weight:normal;">1</div>
<div class="t" style="left:334px;top:725px;font-size:11px;line-height:11px;color:#000;font-weight:normal;transform:scaleX(0.9726);transform-origin:0 0;">1001</div>
<div class="t" style="left:730px;top:725px;font-size:11px;line-height:11px;color:#000;font-weight:normal;transform:scaleX(0.9807);transform-origin:0 0;">0,000</div>
<div class="t" style="left:790px;top:725px;font-size:11px;line-height:11px;color:#000;font-weight:normal;transform:scaleX(0.9807);transform-origin:0 0;">0,000</div>
<div class="t" style="left:889px;top:725px;font-size:11px;line-height:11px;color:#000;font-weight:normal;transform:scaleX(0.9807);transform-origin:0 0;">0,000</div>
<div class="t" style="left:974px;top:725px;font-size:11px;line-height:11px;color:#000;font-weight:normal;transform:scaleX(0.8557);transform-origin:0 0;">MODUL</div>
<div style="position:absolute;left:1278px;top:723px;width:1px;height:13px;background:#bdbdbd;"></div>
<div style="position:absolute;left:287px;top:237px;width:1px;height:504px;background:#d8d4cc;"></div>
<div style="position:absolute;left:329px;top:237px;width:1px;height:504px;background:#d8d4cc;"></div>
<div style="position:absolute;left:378px;top:237px;width:1px;height:504px;background:#d8d4cc;"></div>
<div style="position:absolute;left:495px;top:237px;width:1px;height:504px;background:#d8d4cc;"></div>
<div style="position:absolute;left:725px;top:237px;width:1px;height:504px;background:#d8d4cc;"></div>
<div style="position:absolute;left:786px;top:237px;width:1px;height:504px;background:#d8d4cc;"></div>
<div style="position:absolute;left:885px;top:237px;width:1px;height:504px;background:#d8d4cc;"></div>
<div style="position:absolute;left:969px;top:237px;width:1px;height:504px;background:#d8d4cc;"></div>
<div style="position:absolute;left:1079px;top:237px;width:1px;height:504px;background:#d8d4cc;"></div>
<div style="position:absolute;left:1197px;top:237px;width:1px;height:504px;background:#d8d4cc;"></div>
<div style="position:absolute;left:1240px;top:237px;width:1px;height:504px;background:#d8d4cc;"></div>
<svg style="position:absolute;left:233px;top:474px;" width="5" height="8" viewBox="0 0 5 8"><path d="M0 0l5 4-5 4z" fill="#5a5a5a"/></svg>
<div style="position:absolute;left:245px;top:468px;width:1034px;height:1px;background:repeating-linear-gradient(90deg,#fff 0 1px,#000 1px 2px);"></div>
<div style="position:absolute;left:245px;top:487px;width:1034px;height:1px;background:repeating-linear-gradient(90deg,#fff 0 1px,#000 1px 2px);"></div>
<div style="position:absolute;left:245px;top:468px;width:1px;height:20px;background:repeating-linear-gradient(180deg,#fff 0 1px,#000 1px 2px);"></div>
<div style="position:absolute;left:226px;top:917px;width:1053px;height:1px;background:#c6c6c6;"></div>
<div style="position:absolute;left:226px;top:948px;width:1053px;height:17px;background:#e9e9e9;"></div>
<div style="position:absolute;left:243px;top:948px;width:307px;height:17px;background:#cdcdcd;"></div>
<svg style="position:absolute;left:231px;top:953px;" width="6" height="8" viewBox="0 0 6 8"><path d="M5 0.5L1.5 4 5 7.5" stroke="#6d6d6d" stroke-width="1.8" fill="none"/></svg>
<svg style="position:absolute;left:1268px;top:953px;" width="6" height="8" viewBox="0 0 6 8"><path d="M1 0.5L4.5 4 1 7.5" stroke="#6d6d6d" stroke-width="1.8" fill="none"/></svg>
<div style="position:absolute;left:225px;top:965px;width:1055px;height:1px;background:#c6c6c6;"></div>
<div style="position:absolute;left:482px;top:89px;width:270px;height:76px;background:#fff;box-sizing:border-box;border:1px solid #a0a0a0;box-shadow:1px 1px 1px rgba(0,0,0,0.12)"></div>
<svg style="position:absolute;left:490px;top:98px;" width="15" height="12" viewBox="0 0 15 12"><rect x="0.5" y="3.5" width="2.5" height="7.5" rx="1" fill="#b4d85a" stroke="#577a10" stroke-width="1"/><rect x="4.5" y="6.5" width="2.5" height="4.5" rx="1" fill="#b4d85a" stroke="#577a10" stroke-width="1"/><path d="M3.2 0.9C4.8-1.6 8.8-1.6 10 3.9" stroke="#3a67b0" stroke-width="2.3" fill="none"/><path d="M3.2 0.9C4.8-1.6 8.8-1.6 10 3.9" stroke="#eef6ff" stroke-width="0.9" fill="none"/><path d="M7.4 4.4h6.3l-3.15 4.4z" fill="#9ad4f4" stroke="#2e5aa0" stroke-width="0.8"/></svg>
<svg style="position:absolute;left:490px;top:122px;" width="15" height="12" viewBox="0 0 15 12"><rect x="0.5" y="3.5" width="2.5" height="7.5" rx="1" fill="#b4d85a" stroke="#577a10" stroke-width="1"/><rect x="4.5" y="6.5" width="2.5" height="4.5" rx="1" fill="#b4d85a" stroke="#577a10" stroke-width="1"/><path d="M3.2 0.9C4.8-1.6 8.8-1.6 10 3.9" stroke="#3a67b0" stroke-width="2.3" fill="none"/><path d="M3.2 0.9C4.8-1.6 8.8-1.6 10 3.9" stroke="#eef6ff" stroke-width="0.9" fill="none"/><path d="M7.4 4.4h6.3l-3.15 4.4z" fill="#9ad4f4" stroke="#2e5aa0" stroke-width="0.8"/></svg>
<svg style="position:absolute;left:490px;top:143px;" width="16" height="16" viewBox="0 0 16 16"><path d="M9.00 9.47 L10.29 10.43 L9.64 11.99 L8.05 11.76 L7.96 11.85 L8.19 13.44 L6.63 14.09 L5.67 12.80 L5.53 12.80 L4.57 14.09 L3.01 13.44 L3.24 11.85 L3.15 11.76 L1.56 11.99 L0.91 10.43 L2.20 9.47 L2.20 9.33 L0.91 8.37 L1.56 6.81 L3.15 7.04 L3.24 6.95 L3.01 5.36 L4.57 4.71 L5.53 6.00 L5.67 6.00 L6.63 4.71 L8.19 5.36 L7.96 6.95 L8.05 7.04 L9.64 6.81 L10.29 8.37 L9.00 9.33Z" fill="#3d7bc4"/><circle cx="5.6" cy="9.4" r="2" fill="#fff"/><path d="M12 0.8l3 3-3 3-3-3z" fill="#fff" stroke="#3d7bc4" stroke-width="1.2"/></svg>
<div class="t" style="left:517px;top:97px;font-size:12px;line-height:12px;color:#333;font-weight:normal;transform:scaleX(1.0221);transform-origin:0 0;">Compartment Immediate for Pick-up</div>
<div class="t" style="left:517px;top:121px;font-size:12px;line-height:12px;color:#333;font-weight:normal;transform:scaleX(1.0134);transform-origin:0 0;">Compartment Immediate for Deposit</div>
<div class="t" style="left:517px;top:145px;font-size:12px;line-height:12px;color:#333;font-weight:normal;transform:scaleX(1.0194);transform-origin:0 0;">Compartment Immediate for Inventory</div>
</body></html>
